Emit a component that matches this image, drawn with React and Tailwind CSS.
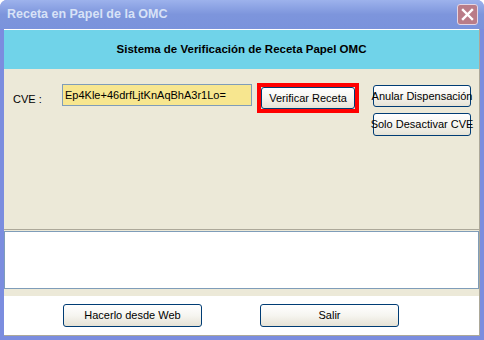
const FONT = { fontFamily: '"Liberation Sans", Arial, sans-serif' }

function XpButton({ children, className = '' }) {
  return (
    <div
      className={`flex items-center justify-center rounded-[3px] border border-[#003c74] bg-gradient-to-b from-[#ffffff] via-[#f6f5f0] to-[#e6e3d6] text-[11px] text-black ${className}`}
    >
      {children}
    </div>
  )
}

export default function App() {
  return (
    <div style={FONT} className="flex h-[340px] w-[484px] flex-col rounded-t-[7px] bg-[#7b8ddf]">
      {/* title bar */}
      <div className="flex h-[29px] items-center justify-between rounded-t-[7px] bg-gradient-to-b from-[#9db2ec] via-[#7d95dc] to-[#7a93dc] pl-[7px] pr-[6px]">
        <span className="text-[12.5px] font-bold text-[#d8e2f7]">Receta en Papel de la OMC</span>
        <div className="flex h-[21px] w-[21px] items-center justify-center rounded-[3px] border border-[#e4d6e4] bg-[#b97c88]">
          <svg width="13" height="13" viewBox="0 0 13 13">
            <path d="M2 2 L11 11 M11 2 L2 11" stroke="#ffffff" strokeWidth="2.4" strokeLinecap="square" />
          </svg>
        </div>
      </div>

      {/* client area */}
      <div className="mx-[4px] mb-[4px] flex flex-1 flex-col border-r border-b border-[#aca899] bg-white">
        <div className="flex h-[40px] items-center justify-center border-t border-white bg-[#70d3e9] text-[11.5px] font-bold text-black">
          Sistema de Verificación de Receta Papel OMC
        </div>

        <div className="flex h-[160px] items-start bg-[#ece9d8] pt-[14px]">
          <span className="mt-[8px] ml-[9px] w-[49px] text-[11px] text-black">CVE :</span>
          <div className="mt-[1px] flex h-[22px] w-[190px] items-center border border-[#7f9db9] bg-[#f7e68f] pl-[2px] text-[11px] text-black">
            Ep4Kle+46drfLjtKnAqBhA3r1Lo=
          </div>
          <div className="ml-[5px] border-[4px] border-[#ff0000]">
            <XpButton className="h-[22px] w-[94px]">Verificar Receta</XpButton>
          </div>
          <div className="mt-[2px] ml-[14px] flex flex-col gap-[6px]">
            <XpButton className="h-[22px] w-[98px] whitespace-nowrap">Anular Dispensación</XpButton>
            <XpButton className="h-[23px] w-[98px] whitespace-nowrap">Solo Desactivar CVE</XpButton>
          </div>
        </div>

        <div className="h-[2px] border-t border-[#aca899] bg-[#ece9d8]" />
        <div className="h-[58px] border border-[#7f9db9] bg-white" />
        <div className="h-[7px] bg-[#ece9d8]" />

        <div className="flex flex-1 items-start bg-white pt-[8px]">
          <XpButton className="ml-[59px] h-[23px] w-[139px]">Hacerlo desde Web</XpButton>
          <XpButton className="ml-[58px] h-[23px] w-[139px]">Salir</XpButton>
        </div>
      </div>
    </div>
  )
}
